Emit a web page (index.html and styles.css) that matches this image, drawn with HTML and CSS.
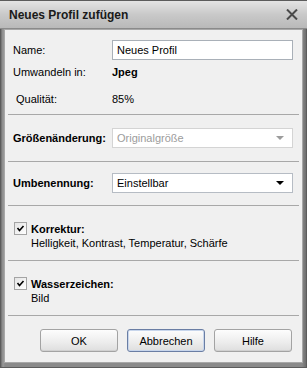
FILE: index.html
```html
<!DOCTYPE html>
<html lang="de">
<head>
    <meta charset="UTF-8">
    <title>Neues Profil zufügen</title>
    <link rel="stylesheet" href="styles.css">
</head>
<body>

    <div class="window">
        <!-- Title bar -->
        <div class="titlebar">
            <span class="title">Neues Profil zufügen</span>
            <svg class="close" width="12" height="11" viewBox="0 0 12 11">
                <path d="M1 0.5 L11 10.5 M11 0.5 L1 10.5" stroke="#4a4a4a" stroke-width="2"/>
            </svg>
        </div>

        <div class="panel">
            <!-- Basic settings -->
            <div class="section basics">
                <div class="row row-name">
                    <span class="label">Name:</span>
                    <div class="textbox">Neues Profil</div>
                </div>
                <div class="row row-format">
                    <span class="label">Umwandeln in:</span>
                    <span class="value bold">Jpeg</span>
                </div>
                <div class="row row-quality">
                    <span class="label indent">Qualität:</span>
                    <span class="value">85%</span>
                </div>
            </div>

            <div class="sep"></div>

            <div class="section resize">
                <div class="row">
                    <span class="label bold">Größenänderung:</span>
                    <div class="combo disabled">
                        <span>Originalgröße</span>
                        <span class="arrow"></span>
                    </div>
                </div>
            </div>

            <div class="sep"></div>

            <div class="section rename">
                <div class="row">
                    <span class="label bold">Umbenennung:</span>
                    <div class="combo">
                        <span>Einstellbar</span>
                        <span class="arrow"></span>
                    </div>
                </div>
            </div>

            <div class="sep"></div>

            <div class="section option">
                <div class="check-row">
                    <span class="checkbox">
                        <svg width="9" height="9" viewBox="0 0 9 9"><path d="M1.5 4 L3.5 6.5 L7.5 2" fill="none" stroke="#000" stroke-width="1.6"/></svg>
                    </span>
                    <span class="bold">Korrektur:</span>
                </div>
                <div class="detail">Helligkeit, Kontrast, Temperatur, Schärfe</div>
            </div>

            <div class="sep"></div>

            <div class="section option">
                <div class="check-row">
                    <span class="checkbox">
                        <svg width="9" height="9" viewBox="0 0 9 9"><path d="M1.5 4 L3.5 6.5 L7.5 2" fill="none" stroke="#000" stroke-width="1.6"/></svg>
                    </span>
                    <span class="bold">Wasserzeichen:</span>
                </div>
                <div class="detail">Bild</div>
            </div>

            <div class="sep"></div>

            <!-- Dialog buttons -->
            <div class="buttons">
                <button class="btn">OK</button>
                <button class="btn default">Abbrechen</button>
                <button class="btn">Hilfe</button>
            </div>
        </div>
    </div>

</body>
</html>
```

FILE: styles.css
```css
body {
    margin: 0;
    background-color: #ffffff;
    font-family: 'Liberation Sans', Arial, sans-serif;
    font-size: 11px;
    color: #000;
}

.window {
    width: 307px;
    height: 368px;
    box-sizing: border-box;
    background: linear-gradient(to right, #6e6e6e, #9a9a9a 2px, #8a8a8a 4px, #8a8a8a calc(100% - 4px), #6e6e6e);
    border: 1px solid #5c5c5c;
    display: flex;
    flex-direction: column;
}

.titlebar {
    height: 27px;
    display: flex;
    align-items: center;
    justify-content: space-between;
    padding: 0 9px 0 9px;
    margin: 0 -1px;
    background: linear-gradient(to bottom, #e4e4e4, #c9c9c9 50%, #b9b9b9);
    border-bottom: 1px solid #8a8a8a;
    flex-shrink: 0;
}

.title {
    font-weight: bold;
    font-size: 12px;
    color: #1a1a1a;
}

.close {
    margin-top: -1px;
}

.panel {
    flex: 1;
    margin: 0 3px 4px 3px;
    background-color: #f0f0f0;
    border: 1px solid #a8a8a8;
    display: flex;
    flex-direction: column;
}

.section {
    padding: 0 9px 0 8px;
}

.row {
    display: flex;
    align-items: center;
    height: 20px;
}

.label {
    width: 99px;
    flex-shrink: 0;
    white-space: nowrap;
}

.label.indent {
    padding-left: 3px;
    width: 96px;
}

.bold {
    font-weight: bold;
}

.basics {
    padding-top: 8px;
    padding-bottom: 4px;
}

.row-name {
    height: 24px;
}

.row-quality {
    margin-top: 6px;
    height: 22px;
}

.textbox {
    flex: 1;
    height: 20px;
    box-sizing: border-box;
    border: 1px solid #a9b0b8;
    background-color: #fff;
    padding: 0 4px;
    line-height: 18px;
}

.resize {
    padding-top: 13px;
    padding-bottom: 13px;
}

.rename {
    padding-top: 11px;
    padding-bottom: 12px;
}

.combo {
    flex: 1;
    height: 20px;
    box-sizing: border-box;
    border: 1px solid #b6bcc4;
    background-color: #fff;
    display: flex;
    align-items: center;
    justify-content: space-between;
    padding: 0 8px 0 4px;
}

.combo .arrow {
    width: 0;
    height: 0;
    border-left: 4px solid transparent;
    border-right: 4px solid transparent;
    border-top: 4px solid #000;
}

.combo.disabled {
    color: #9c9c9c;
    border-color: #d4d4d4;
}

.combo.disabled .arrow {
    border-top-color: #9c9c9c;
}

.sep {
    height: 1px;
    margin: 0 3px;
    background-color: #a8a8a8;
}

.option {
    padding-top: 16px;
    padding-bottom: 9px;
    padding-left: 9px;
}

.check-row {
    display: flex;
    align-items: center;
    height: 13px;
}

.checkbox {
    width: 13px;
    height: 13px;
    box-sizing: border-box;
    border: 1px solid #a4a4a4;
    background: linear-gradient(to bottom right, #e4e4e4, #ffffff);
    margin-right: 4px;
    display: flex;
    align-items: center;
    justify-content: center;
}

.detail {
    padding-left: 17px;
    line-height: 16px;
}

.buttons {
    display: flex;
    justify-content: flex-end;
    gap: 9px;
    padding: 13px 10px 0 0;
}

.btn {
    width: 78px;
    height: 23px;
    font-family: 'Liberation Sans', Arial, sans-serif;
    font-size: 11px;
    color: #000;
    border: 1px solid #a3a3a3;
    border-radius: 3px;
    background: linear-gradient(to bottom, #fdfdfd, #ececec 60%, #dedede);
    box-shadow: inset 0 -1px 0 #d0d0d0;
    padding: 0;
}

.btn.default {
    border-color: #6a7ea4;
    box-shadow: inset 0 0 0 1px #c8d6ec;
}
```
